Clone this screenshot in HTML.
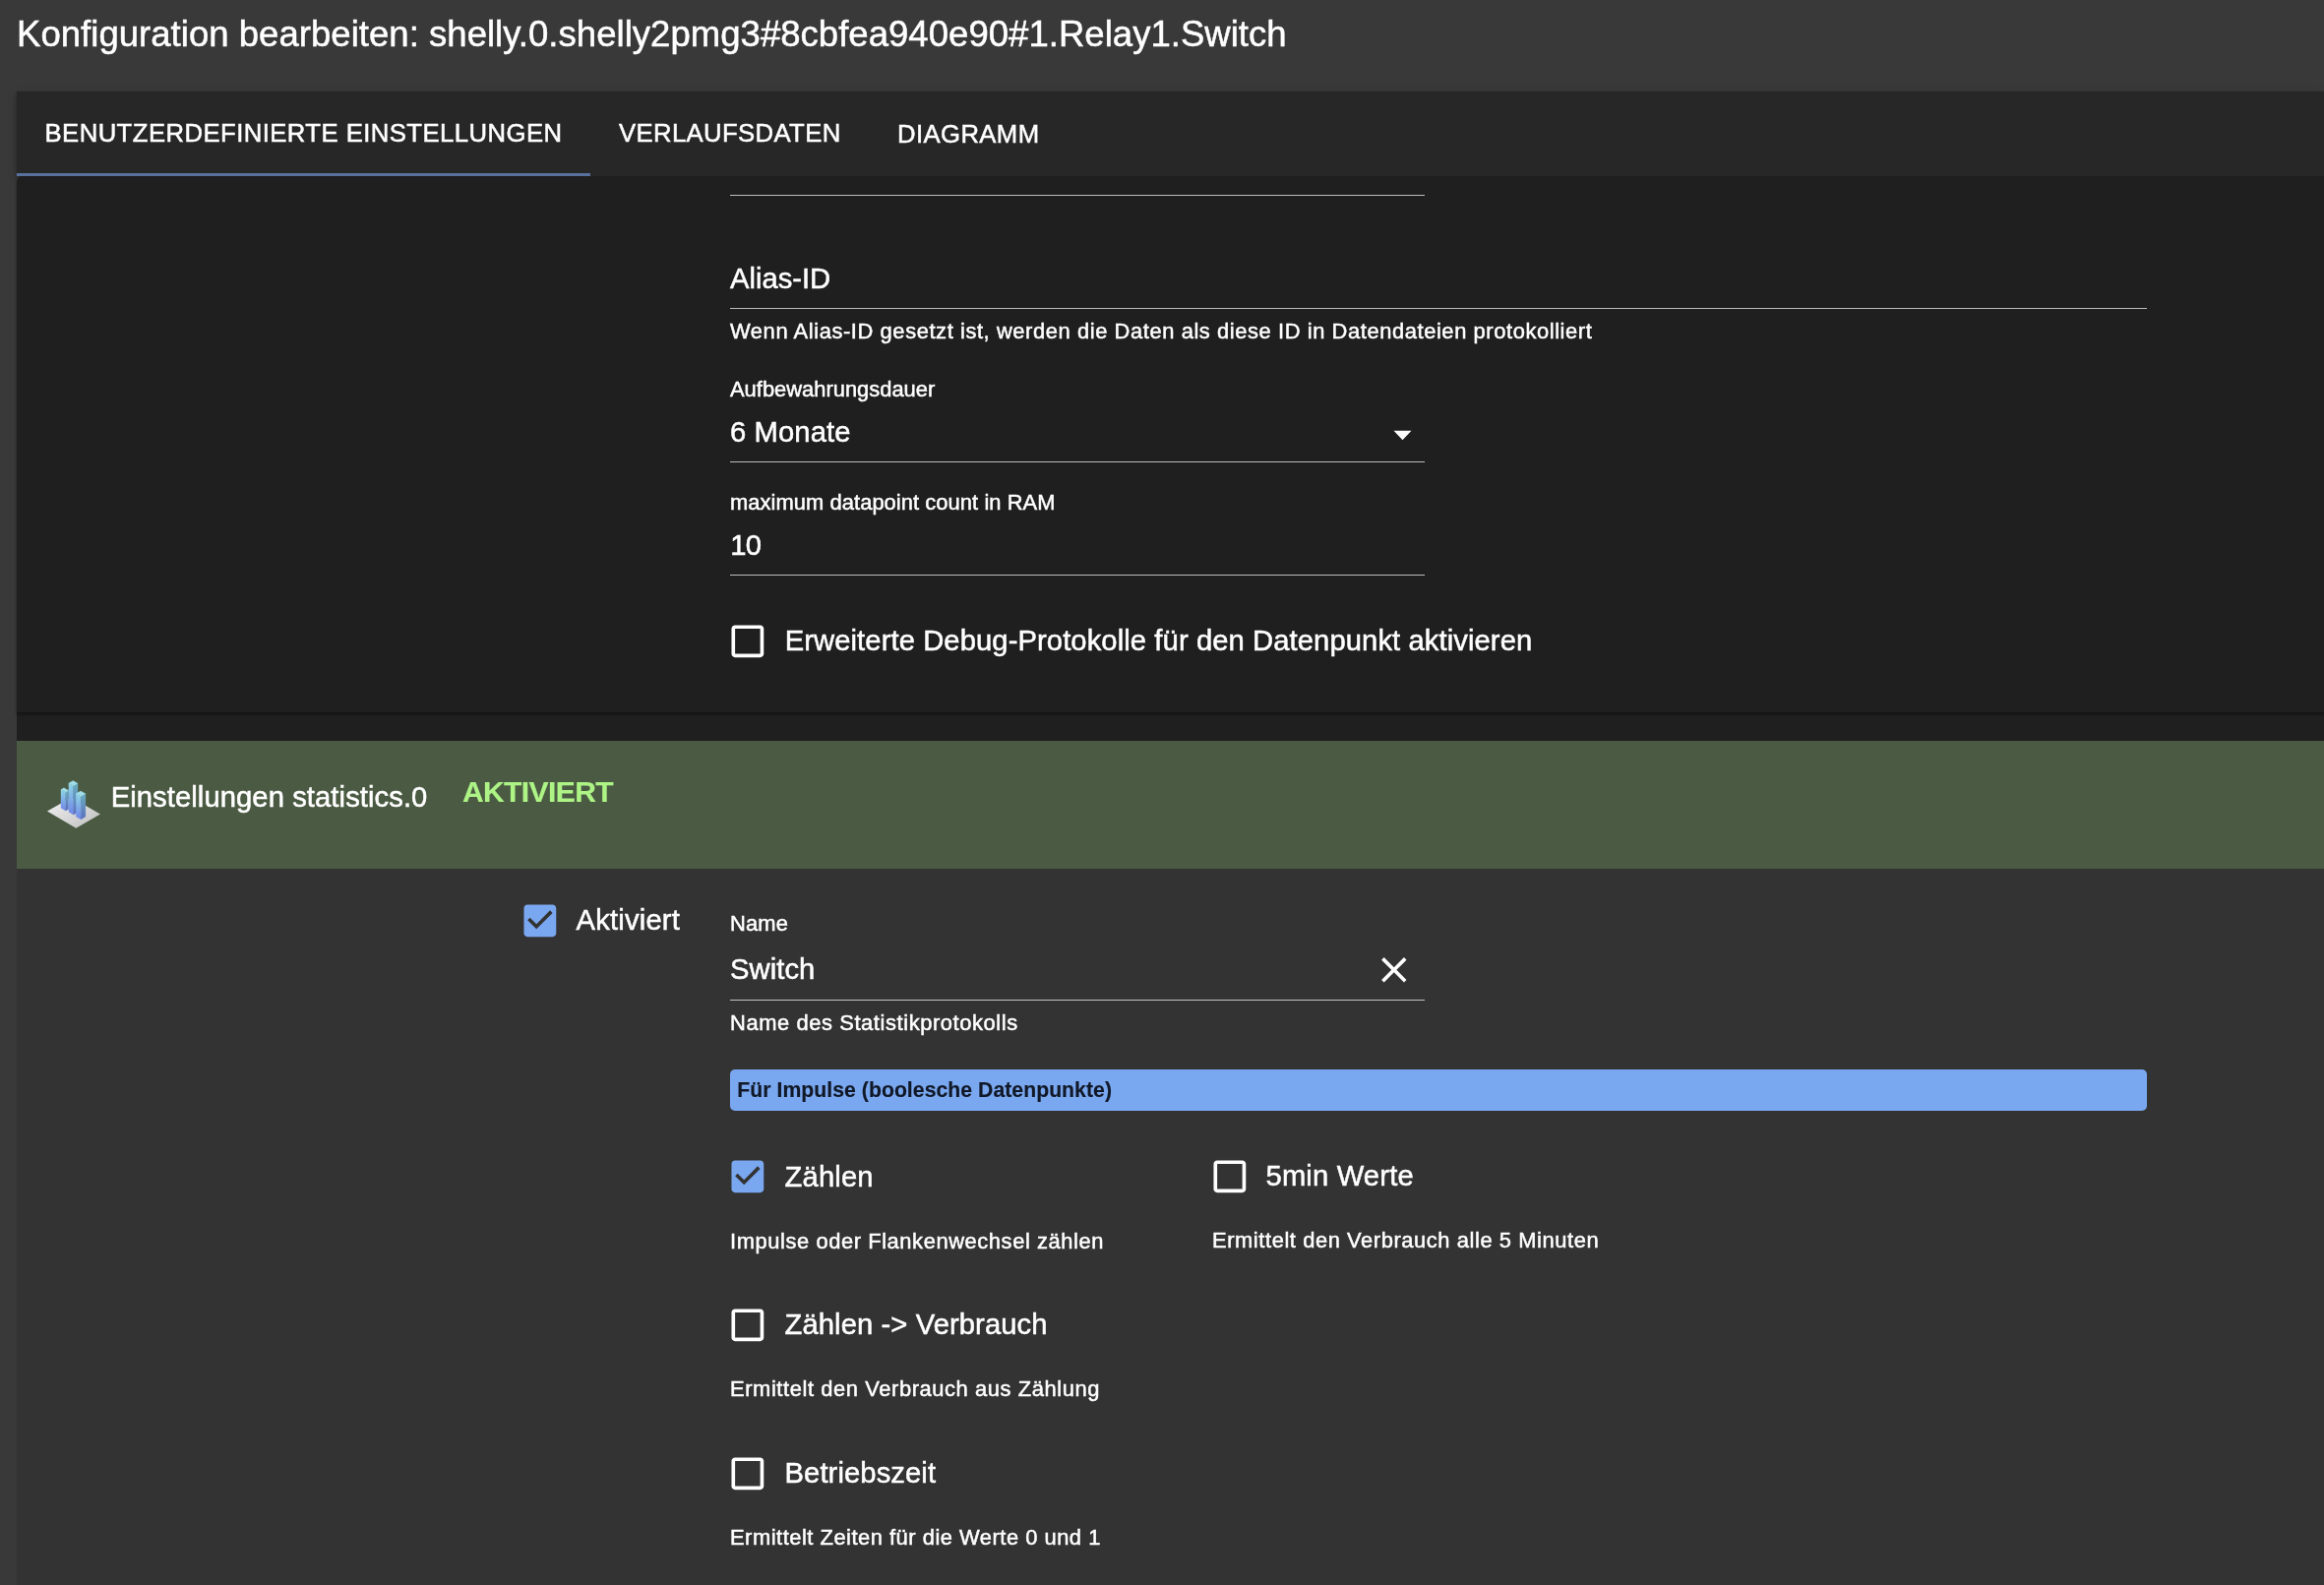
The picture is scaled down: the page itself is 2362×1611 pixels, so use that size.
<!DOCTYPE html>
<html><head><meta charset="utf-8"><title>Konfiguration bearbeiten</title><style>
html,body{margin:0;padding:0;width:2362px;height:1611px;overflow:hidden;background:#393939;}
body{position:relative;font-family:"Liberation Sans", sans-serif;}
#w{position:absolute;left:0;top:0;width:2362px;height:1611px;will-change:transform;}
.t{position:absolute;white-space:nowrap;line-height:normal;-webkit-text-stroke:0.5px currentColor;}
.r{position:absolute;box-sizing:content-box;}
</style></head><body><div id="w">
<div class="r" style="left:0px;top:0px;width:2362.00px;height:1611.00px;background:#393939;"></div>
<div class="r" style="left:17px;top:93px;width:2345.00px;height:86.00px;background:#272727;box-shadow:0 2px 4px -1px rgba(0,0,0,.2),0 4px 5px 0 rgba(0,0,0,.14),0 1px 10px 0 rgba(0,0,0,.12);"></div>
<div class="r" style="left:17px;top:700px;width:2345.00px;height:911.00px;background:#1f1f1f;"></div>
<div class="r" style="left:17px;top:179px;width:2345.00px;height:545.00px;background:#1f1f1f;box-shadow:0 2px 3px rgba(0,0,0,.45);border-radius:6px 0 0 0;"></div>
<div class="r" style="left:17px;top:753px;width:2345.00px;height:130.00px;background:#4b5b43;"></div>
<div class="r" style="left:17px;top:883px;width:2345.00px;height:728.00px;background:#333333;"></div>
<div class="r" style="left:17px;top:176px;width:583.00px;height:3.00px;background:#57709c;"></div>
<div class="r" style="left:742px;top:197.85000000000002px;width:706.00px;height:1.40px;background:rgba(255,255,255,0.7);"></div>
<div class="r" style="left:742px;top:312.8px;width:1440.00px;height:1.40px;background:rgba(255,255,255,0.7);"></div>
<svg class="r" style="left:1416px;top:437px" width="20" height="12" viewBox="0 0 20 12"><path d="M0.5 0.8 H18.5 L9.5 10.3 Z" fill="#fff"/></svg>
<div class="r" style="left:742px;top:468.7px;width:706.00px;height:1.40px;background:rgba(255,255,255,0.7);"></div>
<div class="r" style="left:742px;top:583.8px;width:706.00px;height:1.40px;background:rgba(255,255,255,0.7);"></div>
<svg class="r" style="left:737.74px;top:629.74px" width="43.73" height="43.73" viewBox="0 0 24 24"><path fill="#fff" d="M19 5v14H5V5h14m0-2H5c-1.1 0-2 .9-2 2v14c0 1.1.9 2 2 2h14c1.1 0 2-.9 2-2V5c0-1.1-.9-2-2-2z"/></svg>
<svg class="r" style="left:526.74px;top:913.53px" width="43.73" height="43.73" viewBox="0 0 24 24"><path fill="#7aa8f0" d="M19 3H5c-1.11 0-2 .9-2 2v14c0 1.1.89 2 2 2h14c1.11 0 2-.9 2-2V5c0-1.1-.89-2-2-2z"/><path fill="#333" transform="translate(0 -0.35)" d="M10 17l-5-5 1.41-1.41L10 14.17l7.59-7.59L19 8l-9 9z"/></svg>
<svg class="r" style="left:1394.5px;top:963.7px" width="43.6" height="43.6" viewBox="0 0 24 24"><path fill="#fff" d="M19 6.41 17.59 5 12 10.59 6.41 5 5 6.41 10.59 12 5 17.59 6.41 19 12 13.41 17.59 19 19 17.59 13.41 12z"/></svg>
<div class="r" style="left:742px;top:1015.6999999999999px;width:706.00px;height:1.40px;background:rgba(255,255,255,0.7);"></div>
<div class="r" style="left:742px;top:1087px;width:1440.00px;height:41.80px;background:#7aa8f0;border-radius:5px;"></div>
<svg class="r" style="left:738.03px;top:1173.63px" width="43.73" height="43.73" viewBox="0 0 24 24"><path fill="#7aa8f0" d="M19 3H5c-1.11 0-2 .9-2 2v14c0 1.1.89 2 2 2h14c1.11 0 2-.9 2-2V5c0-1.1-.89-2-2-2z"/><path fill="#333" transform="translate(0 -0.35)" d="M10 17l-5-5 1.41-1.41L10 14.17l7.59-7.59L19 8l-9 9z"/></svg>
<svg class="r" style="left:1227.84px;top:1173.63px" width="43.73" height="43.73" viewBox="0 0 24 24"><path fill="#fff" d="M19 5v14H5V5h14m0-2H5c-1.1 0-2 .9-2 2v14c0 1.1.9 2 2 2h14c1.1 0 2-.9 2-2V5c0-1.1-.9-2-2-2z"/></svg>
<svg class="r" style="left:738.03px;top:1324.63px" width="43.73" height="43.73" viewBox="0 0 24 24"><path fill="#fff" d="M19 5v14H5V5h14m0-2H5c-1.1 0-2 .9-2 2v14c0 1.1.9 2 2 2h14c1.1 0 2-.9 2-2V5c0-1.1-.9-2-2-2z"/></svg>
<svg class="r" style="left:738.03px;top:1475.93px" width="43.73" height="43.73" viewBox="0 0 24 24"><path fill="#fff" d="M19 5v14H5V5h14m0-2H5c-1.1 0-2 .9-2 2v14c0 1.1.9 2 2 2h14c1.1 0 2-.9 2-2V5c0-1.1-.9-2-2-2z"/></svg>
<svg class="r" style="left:40px;top:785px" width="70" height="65" viewBox="0 0 70 65">
<defs>
<linearGradient id="gb" x1="0" y1="0" x2="1" y2="1"><stop offset="0" stop-color="#f4f4f4"/><stop offset="1" stop-color="#bdbdbd"/></linearGradient>
<linearGradient id="bf" x1="0" y1="0" x2="0" y2="1"><stop offset="0" stop-color="#8fd6e6"/><stop offset="1" stop-color="#6f86e8"/></linearGradient>
<linearGradient id="bs" x1="0" y1="0" x2="0" y2="1"><stop offset="0" stop-color="#6aaebf"/><stop offset="1" stop-color="#5a6fbf"/></linearGradient>
</defs>
<polygon points="8,39.6 32.6,25.4 61.9,42.6 37.3,56.8" fill="url(#gb)"/>
<g stroke-width="0.35" stroke-linejoin="round">
<polygon points="22,17.5 26.8,20.3 26.8,39 22,36.2" fill="url(#bf)" stroke="url(#bf)"/>
<polygon points="26.8,20.3 29.7,18.6 29.7,37.3 26.8,39" fill="url(#bs)" stroke="url(#bs)"/>
<polygon points="22,17.5 25,15.8 29.7,18.6 26.8,20.3" fill="#9fdde8" stroke="#9fdde8"/>
<polygon points="29.9,11 34.6,13.8 34.6,43 29.9,40.2" fill="url(#bf)" stroke="url(#bf)"/>
<polygon points="34.6,13.8 39,11.2 39,40.4 34.6,43" fill="url(#bs)" stroke="url(#bs)"/>
<polygon points="29.9,11 34.3,8.6 39,11.2 34.6,13.8" fill="#9fdde8" stroke="#9fdde8"/>
<polygon points="37.3,21.6 42.2,24.4 42.2,47.8 37.3,45" fill="url(#bf)" stroke="url(#bf)"/>
<polygon points="42.2,24.4 46.9,21.7 46.9,45.1 42.2,47.8" fill="url(#bs)" stroke="url(#bs)"/>
<polygon points="37.3,21.6 42,19 46.9,21.7 42.2,24.4" fill="#9fdde8" stroke="#9fdde8"/>
</g>
</svg>
<div class="t" style="left:17.00px;top:14.47px;font-size:36.5px;color:#fff;letter-spacing:0.038px;">Konfiguration bearbeiten: shelly.0.shelly2pmg3#8cbfea940e90#1.Relay1.Switch</div>
<div class="t" style="left:45.50px;top:121.14px;font-size:25.7px;color:#fff;letter-spacing:0.438px;">BENUTZERDEFINIERTE EINSTELLUNGEN</div>
<div class="t" style="left:628.93px;top:120.74px;font-size:25.7px;color:#fff;letter-spacing:0.381px;">VERLAUFSDATEN</div>
<div class="t" style="left:912.06px;top:121.54px;font-size:25.7px;color:#fff;letter-spacing:0.390px;">DIAGRAMM</div>
<div class="t" style="left:742.00px;top:266.87px;font-size:29.2px;color:#fff;letter-spacing:-0.000px;">Alias-ID</div>
<div class="t" style="left:742.00px;top:324.28px;font-size:21.9px;color:#fff;letter-spacing:0.588px;">Wenn Alias-ID gesetzt ist, werden die Daten als diese ID in Datendateien protokolliert</div>
<div class="t" style="left:742.00px;top:383.48px;font-size:21.9px;color:#fff;letter-spacing:0.009px;">Aufbewahrungsdauer</div>
<div class="t" style="left:742.00px;top:423.31px;font-size:29.2px;color:#fff;letter-spacing:0.117px;">6 Monate</div>
<div class="t" style="left:742.00px;top:498.38px;font-size:21.9px;color:#fff;letter-spacing:0.069px;">maximum datapoint count in RAM</div>
<div class="t" style="left:742.23px;top:538.27px;font-size:29.2px;color:#fff;letter-spacing:-0.594px;">10</div>
<div class="t" style="left:797.67px;top:635.27px;font-size:29.2px;color:#fff;letter-spacing:0.092px;">Erweiterte Debug-Protokolle für den Datenpunkt aktivieren</div>
<div class="t" style="left:112.66px;top:794.45px;font-size:29.2px;color:#fff;letter-spacing:0.083px;">Einstellungen statistics.0</div>
<div class="t" style="left:469.88px;top:788.35px;font-size:30.0px;color:#adf385;font-weight:700;-webkit-text-stroke:0.15px currentColor;letter-spacing:-0.572px;">AKTIVIERT</div>
<div class="t" style="left:585.55px;top:919.17px;font-size:29.2px;color:#fff;letter-spacing:0.185px;">Aktiviert</div>
<div class="t" style="left:742.00px;top:925.98px;font-size:21.9px;color:#fff;letter-spacing:0.145px;">Name</div>
<div class="t" style="left:742.00px;top:969.27px;font-size:29.2px;color:#fff;letter-spacing:0.069px;">Switch</div>
<div class="t" style="left:742.00px;top:1027.08px;font-size:21.9px;color:#fff;letter-spacing:0.593px;">Name des Statistikprotokolls</div>
<div class="t" style="left:749.27px;top:1096.31px;font-size:21.2px;color:#111827;font-weight:700;-webkit-text-stroke:0.15px currentColor;letter-spacing:0.047px;">Für Impulse (boolesche Datenpunkte)</div>
<div class="t" style="left:797.50px;top:1179.77px;font-size:29.2px;color:#fff;letter-spacing:0.165px;">Zählen</div>
<div class="t" style="left:1286.50px;top:1178.77px;font-size:29.2px;color:#fff;letter-spacing:0.160px;">5min Werte</div>
<div class="t" style="left:742.00px;top:1248.58px;font-size:21.9px;color:#fff;letter-spacing:0.583px;">Impulse oder Flankenwechsel zählen</div>
<div class="t" style="left:1232.00px;top:1247.90px;font-size:21.9px;color:#fff;letter-spacing:0.581px;">Ermittelt den Verbrauch alle 5 Minuten</div>
<div class="t" style="left:797.50px;top:1330.17px;font-size:29.2px;color:#fff;letter-spacing:0.096px;">Zählen -&gt; Verbrauch</div>
<div class="t" style="left:742.00px;top:1399.08px;font-size:21.9px;color:#fff;letter-spacing:0.592px;">Ermittelt den Verbrauch aus Zählung</div>
<div class="t" style="left:797.50px;top:1481.17px;font-size:29.2px;color:#fff;letter-spacing:0.096px;">Betriebszeit</div>
<div class="t" style="left:742.00px;top:1550.48px;font-size:21.9px;color:#fff;letter-spacing:0.514px;">Ermittelt Zeiten für die Werte 0 und 1</div>
</div></body></html>
